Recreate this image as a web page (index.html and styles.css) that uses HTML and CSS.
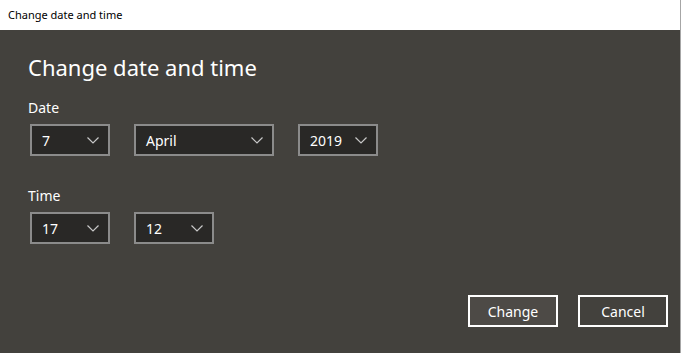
FILE: index.html
```html
<!DOCTYPE html>
<html lang="en">
<head>
	<meta charset="UTF-8">
	<title>Change date and time</title>
	<link rel="stylesheet" href="styles.css">
</head>
<body>
	<div class="window">
		<div class="titlebar">Change date and time</div>
		<div class="content">
			<h1 class="heading">Change date and time</h1>

			<div class="label">Date</div>
			<div class="row">
				<div class="combo combo-small"><span>7</span><svg class="chevron" viewBox="0 0 12 7"><path d="M0.5 0.5 L6 6 L11.5 0.5"/></svg></div>
				<div class="combo combo-wide"><span>April</span><svg class="chevron" viewBox="0 0 12 7"><path d="M0.5 0.5 L6 6 L11.5 0.5"/></svg></div>
				<div class="combo combo-small"><span>2019</span><svg class="chevron" viewBox="0 0 12 7"><path d="M0.5 0.5 L6 6 L11.5 0.5"/></svg></div>
			</div>

			<div class="label label-time">Time</div>
			<div class="row">
				<div class="combo combo-small"><span>17</span><svg class="chevron" viewBox="0 0 12 7"><path d="M0.5 0.5 L6 6 L11.5 0.5"/></svg></div>
				<div class="combo combo-small"><span>12</span><svg class="chevron" viewBox="0 0 12 7"><path d="M0.5 0.5 L6 6 L11.5 0.5"/></svg></div>
			</div>

			<div class="footer">
				<button class="btn btn-primary">Change</button>
				<button class="btn">Cancel</button>
			</div>
		</div>
	</div>
</body>
</html>
```

FILE: styles.css
```css
    body {
    	margin: 0;
    	padding: 0;
    	background-color: #fff;
    	font-family: "Noto Sans", "Open Sans", sans-serif;
    }

    .window {
    	display: flex;
    	flex-direction: column;
    	width: 680px;
    	height: 353px;
    	border-right: 1px solid #a6a6a6;
    }

    .titlebar {
    	height: 30px;
    	padding-left: 8px;
    	font-size: 11px;
    	line-height: 30px;
    	color: #000;
    	background-color: #fff;
    }

    .content {
    	display: flex;
    	flex: 1;
    	flex-direction: column;
    	padding: 20px 12px 26px 28px;
    	background-color: #43413d;
    	color: #fff;
    }

    .heading {
    	margin: 0;
    	font-size: 22px;
    	font-weight: normal;
    	line-height: 34px;
    }

    .label {
    	margin-top: 14px;
    	font-size: 14px;
    	line-height: 20px;
    }
    .label-time {
    	margin-top: 30px;
    }

    .row {
    	display: flex;
    	gap: 24px;
    	margin-top: 6px;
    	margin-left: 2px;
    }

    .combo {
    	display: flex;
    	box-sizing: border-box;
    	height: 32px;
    	padding: 0 9px 0 10px;
    	align-items: center;
    	justify-content: space-between;
    	border: 2px solid #8b8b8b;
    	background-color: #292826;
    	font-size: 14px;
    }
    .combo-small {
    	width: 80px;
    }
    .combo-wide {
    	width: 140px;
    }

    .chevron {
    	width: 12px;
    	height: 7px;
    	fill: none;
    	stroke: #c8c8c8;
    	stroke-width: 1.2;
    }

    .footer {
    	display: flex;
    	gap: 20px;
    	margin-top: auto;
    	justify-content: flex-end;
    }

    .btn {
    	box-sizing: border-box;
    	width: 90px;
    	height: 32px;
    	border: 2px solid #fff;
    	background-color: transparent;
    	color: #fff;
    	font-family: inherit;
    	font-size: 14px;
    }
    .btn-primary {
    	background-color: #4d4a46;
    }
```
